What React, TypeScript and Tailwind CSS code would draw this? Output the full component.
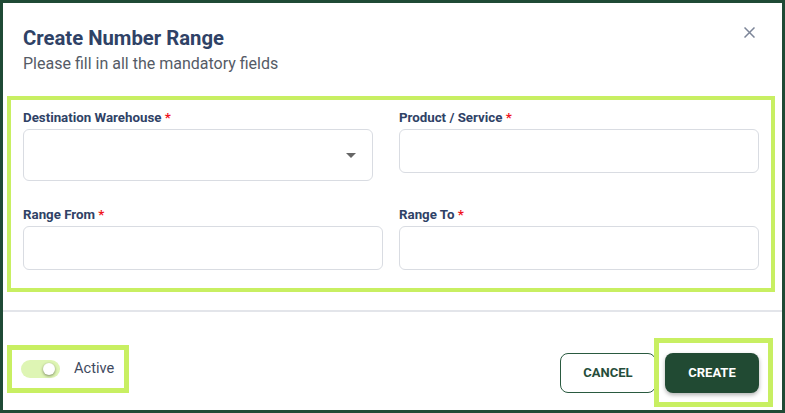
import React, { useState } from "react"

const fields = [
  { label: "Destination Warehouse", kind: "select" },
  { label: "Product / Service", kind: "text" },
  { label: "Range From", kind: "text" },
  { label: "Range To", kind: "text" },
]

const Label = ({ text }: { text: string }) => (
  <label className="mb-[3px] block text-[13.3px] font-bold leading-[16px] text-[#2f4266]">
    {text} <span className="text-[#f0141e]">*</span>
  </label>
)

const CreateNumberRange = () => {
  const [active, setActive] = useState(true)

  return (
    <div className="flex h-[413px] w-[785px] flex-col border-[3px] border-[#1f4a35] bg-white font-['Roboto',sans-serif]">
      <div className="flex items-start justify-between pl-[20px] pr-[27px] pt-[21px]">
        <div>
          <h2 className="text-[20.3px] font-bold leading-[28px] text-[#2f4266]">Create Number Range</h2>
          <p className="mt-[2px] text-[16px] leading-[20px] text-[#555b66]">
            Please fill in all the mandatory fields
          </p>
        </div>
        <button className="mt-[3px] text-[#7c8598]">
          <svg width="11" height="11" viewBox="0 0 11 11" fill="none" stroke="currentColor" strokeWidth="1.5">
            <path d="M0.5 0.5 L10.5 10.5 M10.5 0.5 L0.5 10.5" />
          </svg>
        </button>
      </div>

      <div className="ml-[4px] mr-[7px] mt-[22px] grid grid-cols-2 gap-x-4 gap-y-[26px] border-4 border-[#c8ef62] px-[12px] pb-[18px] pt-[10px]">
        {fields.map((f) => (
          <div key={f.label}>
            <Label text={f.label} />
            {f.kind === "select" ? (
              <div className="flex h-[52px] w-[350px] items-center justify-end rounded-[6px] border border-[#d9dce2] pr-[16px]">
                <svg width="10" height="5" viewBox="0 0 10 5">
                  <path d="M0 0 L10 0 L5 5 Z" fill="#666" />
                </svg>
              </div>
            ) : (
              <input className="block h-[44px] w-full rounded-[6px] border border-[#d9dce2] px-3 outline-none" />
            )}
          </div>
        ))}
      </div>

      <hr className="mt-[18px] border-t-2 border-[#e3e5ea]" />

      <div className="flex items-center justify-between pb-[3px] pt-[26px]">
        <div className="ml-[4px] mt-[7px] flex h-[48px] w-[122px] items-center self-start border-[5px] border-[#c8ef62] pl-[9px]">
          <button
            onClick={() => setActive(!active)}
            className={
              active
                ? "relative h-[18px] w-[39px] rounded-full bg-[#def5b4]"
                : "relative h-[18px] w-[39px] rounded-full bg-[#d9dce2]"
            }
          >
            <span
              className={
                active
                  ? "absolute right-[5px] top-[3px] h-[12px] w-[12px] rounded-full bg-white shadow-[0_1px_3px_rgba(0,0,0,0.45)]"
                  : "absolute left-[5px] top-[3px] h-[12px] w-[12px] rounded-full bg-white shadow-[0_1px_3px_rgba(0,0,0,0.45)]"
              }
            />
          </button>
          <span className="ml-[14px] text-[14.6px] text-[#3f4a60]">Active</span>
        </div>

        <div className="mr-[9px] flex items-center">
          <button className="h-[40px] w-[96px] rounded-[8px] border border-[#2a5a40] text-[13px] font-bold text-[#264d3a]">
            CANCEL
          </button>
          <div className="-ml-[2px] border-[5px] border-[#c8ef62] pb-[9px] pl-[6px] pr-[9px] pt-[10px]">
            <button className="h-[40px] w-[94px] rounded-[8px] bg-[#214a33] text-[13px] font-bold text-white shadow-[0_2px_4px_rgba(0,0,0,0.3)]">
              CREATE
            </button>
          </div>
        </div>
      </div>
    </div>
  )
}

export default function App() {
  return <CreateNumberRange />
}
